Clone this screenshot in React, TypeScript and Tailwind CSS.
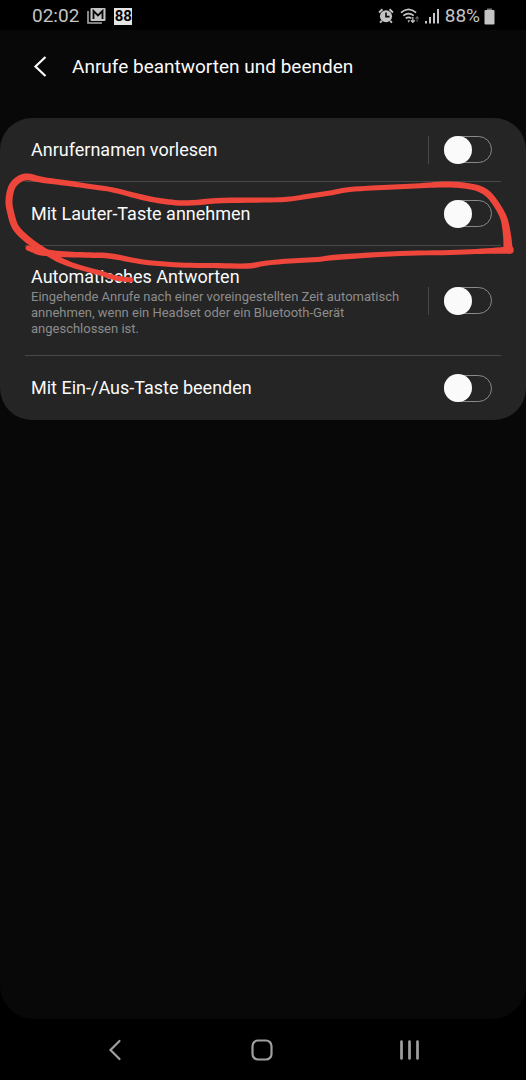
import { useId, useState } from "react";

type Setting = {
  title: string;
  description?: string;
  separated?: boolean;
};

const settings: Setting[] = [
  { title: "Anrufernamen vorlesen", separated: true },
  { title: "Mit Lauter-Taste annehmen" },
  {
    title: "Automatisches Antworten",
    description:
      "Eingehende Anrufe nach einer voreingestellten Zeit automatisch annehmen, wenn ein Headset oder ein Bluetooth-Gerät angeschlossen ist.",
    separated: true,
  },
  { title: "Mit Ein-/Aus-Taste beenden" },
];

function StatusBar() {
  return (
    <div className="flex h-[30px] items-center justify-between bg-black pl-8 pr-[31px] pt-0.5 text-[19px] leading-6 text-[#c4c4c4]">
      <div className="flex items-center gap-2">
        <span>02:02</span>
        <svg className="h-[18px] w-[19px]" viewBox="0 0 19 18" fill="none" aria-hidden="true">
          <path d="M1 4v12h14" stroke="#aaa" strokeWidth="1.6" />
          <rect x="3.5" y="1" width="15" height="13" rx="1" fill="#c4c4c4" />
          <path d="M6.5 12V4l4.500 4.500L15.500 4v8" stroke="#080808" strokeWidth="1.8" />
        </svg>
        <span className="flex h-[17px] w-[18px] items-center justify-center bg-[#e4e4e4] text-[15px] font-bold leading-4 text-black">
          88
        </span>
      </div>
      <div className="flex items-center gap-1.5">
        <svg className="size-4" viewBox="0 0 18 18" fill="none" aria-hidden="true">
          <circle cx="9" cy="9.300" r="6.800" fill="#c4c4c4" />
          <path d="M1.200 5 5 1.500M16.800 5 13 1.500M4.300 14.500l-2 2M13.700 14.500l2 2" stroke="#c4c4c4" strokeWidth="2.200" />
          <path d="M9 5v4.700h4" stroke="#080808" strokeWidth="1.800" />
        </svg>
        <svg className="h-[18px] w-[19px]" viewBox="0 0 20 18" fill="none" aria-hidden="true">
          <g stroke="#c4c4c4" strokeWidth="1.700">
            <path d="M1 5.500q8-7 16 0" />
            <path d="M3.500 8.700q5.500-4.500 11 0" />
            <path d="M6 11.600q3-2.400 6 0" />
          </g>
          <path d="M8 13.500h2.500L9.200 16z" fill="#c4c4c4" />
          <path d="M13.500 10v5M11.500 13.500l2 2.200 2-2.200" stroke="#c4c4c4" strokeWidth="1.300" />
          <path d="M18 15v-5M16.300 11.700 18 9.800l1.700 1.900" stroke="#666" strokeWidth="1.100" />
        </svg>
        <svg className="h-4 w-[14px]" viewBox="0 0 14 16" fill="#c4c4c4" aria-hidden="true">
          <rect x="0" y="13" width="2" height="2.500" />
          <rect x="4" y="9" width="2" height="6.500" />
          <rect x="8" y="5" width="2" height="10.500" />
          <rect x="12" y="1" width="2" height="14.500" />
        </svg>
        <span className="flex items-center gap-1">
          <span>88%</span>
          <svg className="h-[17px] w-[11px]" viewBox="0 0 11 17" aria-hidden="true">
            <rect x="3" y="0.500" width="5" height="2" fill="#777" />
            <rect x="0.500" y="2" width="10" height="14.500" rx="1" fill="#c4c4c4" />
          </svg>
        </span>
      </div>
    </div>
  );
}

function SettingRow({ title, description, separated }: Setting) {
  const [on, setOn] = useState(false);
  const id = useId();
  return (
    <li
      className={`mx-[25px] flex items-center border-b border-[#484848] pl-[6px] pr-[9px] last:border-b-0 ${
        description ? "min-h-[110px]" : "min-h-16"
      }`}
    >
      <div className="min-w-0 flex-1 pr-5">
        <label htmlFor={id} className="block text-[18px] leading-6 text-[#fafafa]">
          {title}
        </label>
        {description && <p className="text-[13px] leading-4 text-[#8c8c8c]">{description}</p>}
      </div>
      {separated && <span className="mr-[15px] h-7 w-px bg-[#484848]" />}
      <span className="grid h-7 w-12 shrink-0 items-center">
        <input
          id={id}
          type="checkbox"
          role="switch"
          checked={on}
          onChange={(e) => setOn(e.target.checked)}
          className="peer col-start-1 row-start-1 h-[27px] w-12 cursor-pointer appearance-none rounded-full border border-[#8a8a8a] checked:bg-[#3e6fe0]"
        />
        <span className="pointer-events-none col-start-1 row-start-1 size-7 rounded-full bg-[#fafafa] peer-checked:justify-self-end" />
      </span>
    </li>
  );
}

// Pen samples: x, y, pen width.
type Sample = [number, number, number];

const lowerLine: Sample[] = [
  [28, 248, 5], [34, 250, 6], [41, 252, 7], [60, 254, 6], [85, 255, 5.5], [110, 256, 5.5],
  [143, 262, 5], [180, 265, 5], [213, 265.5, 5], [247, 266, 5.5], [267, 263, 5], [290, 261, 5],
  [317, 259.5, 5], [340, 257, 5.5], [400, 253.5, 5], [450, 252.5, 5], [487, 251, 5.5], [510, 250, 7.5],
];

const upperLoop: Sample[] = [
  [508, 248, 9], [507, 235, 8], [504, 219, 7], [498, 207, 6.5], [490, 196, 6.5], [482, 190, 6.5],
  [473, 187, 6], [459, 185, 6], [443, 184.5, 6], [415, 186, 5], [383, 187.5, 5], [350, 189.5, 5],
  [330, 193, 5], [310, 196, 5], [290, 199, 5], [270, 200, 5], [223, 200.5, 5.5], [187, 203, 5.5],
  [165, 201.5, 5.5], [143, 197.5, 5.5], [113, 190, 5], [90, 186.5, 5], [70, 183.5, 5.5],
  [43, 180, 6], [25, 177, 7], [13, 185, 7], [9, 200, 7], [11, 214, 7], [16, 228, 7],
  [28, 240, 7], [43, 250, 6], [58, 259, 6], [75, 266, 5], [100, 273, 5], [116, 278, 5], [131, 280, 5],
];

function smooth(points: Sample[], steps = 6): Sample[] {
  const result: Sample[] = [];
  for (let i = 0; i < points.length - 1; i++) {
    const a = points[Math.max(i - 1, 0)];
    const b = points[i];
    const c = points[i + 1];
    const d = points[Math.min(i + 2, points.length - 1)];
    for (let s = 0; s < steps; s++) {
      const t = s / steps;
      const at = (k: number) =>
        0.5 *
        (2 * b[k] +
          (c[k] - a[k]) * t +
          (2 * a[k] - 5 * b[k] + 4 * c[k] - d[k]) * t * t +
          (3 * b[k] - a[k] - 3 * c[k] + d[k]) * t * t * t);
      result.push([at(0), at(1), at(2)]);
    }
  }
  result.push(points[points.length - 1]);
  return result;
}

// Builds one closed band whose thickness follows the pen width.
function band(points: Sample[]): string {
  const line = smooth(points);
  const left: string[] = [];
  const right: string[] = [];
  line.forEach(([x, y, w], i) => {
    const before = line[Math.max(i - 1, 0)];
    const after = line[Math.min(i + 1, line.length - 1)];
    const dx = after[0] - before[0];
    const dy = after[1] - before[1];
    const length = Math.hypot(dx, dy) || 1;
    const nx = (-dy / length) * (w / 2);
    const ny = (dx / length) * (w / 2);
    left.push(`${x + nx} ${y + ny}`);
    right.unshift(`${x - nx} ${y - ny}`);
  });
  return `M${left.concat(right).join("L")}Z`;
}

function PenLine({ points }: { points: Sample[] }) {
  const ends = [points[0], points[points.length - 1]];
  return (
    <g>
      <path d={band(points)} />
      {ends.map(([x, y, w]) => (
        <circle key={x} cx={x} cy={y} r={w / 2} />
      ))}
    </g>
  );
}

function Marker() {
  return (
    <svg
      className="pointer-events-none absolute inset-0 h-full w-full"
      viewBox="0 118 526 302"
      preserveAspectRatio="none"
      fill="#ef463c"
      aria-hidden="true"
    >
      <PenLine points={upperLoop} />
      <PenLine points={lowerLine} />
    </svg>
  );
}

function NavigationBar() {
  return (
    <nav className="flex h-[61px] items-center justify-around bg-black pl-[41px] pr-11 text-[#a0a0a0]">
      <button type="button" aria-label="Zurück" className="p-2">
        <svg className="size-6" viewBox="0 0 24 24" fill="none" stroke="currentColor" strokeWidth="2.200" strokeLinecap="round">
          <path d="M16.500 3 7.500 12l9 9" />
        </svg>
      </button>
      <button type="button" aria-label="Startbildschirm" className="p-2">
        <svg className="size-6" viewBox="0 0 24 24" fill="none" stroke="currentColor" strokeWidth="2.200">
          <rect x="2.500" y="2.500" width="19" height="19" rx="5.500" />
        </svg>
      </button>
      <button type="button" aria-label="Letzte Apps" className="p-2">
        <svg className="size-6" viewBox="0 0 24 24" fill="none" stroke="currentColor" strokeWidth="2.700" strokeLinecap="round">
          <path d="M4.500 3.500v17M12.500 3.500v17M20.500 3.500v17" />
        </svg>
      </button>
    </nav>
  );
}

export default function App() {
  return (
    <div className="flex min-h-screen flex-col bg-black font-[Roboto,sans-serif]">
      <StatusBar />
      <main className="flex-1 rounded-b-[34px] bg-[#080808]">
        <header className="flex h-[88px] items-center gap-5 pb-[14px] pl-7">
          <button type="button" aria-label="Zurück" className="text-[#fafafa]">
            <svg className="size-6" viewBox="0 0 24 24" fill="none" stroke="currentColor" strokeWidth="2.200">
              <path d="M17.500 2 7.500 11.500l10 9.500" />
            </svg>
          </button>
          <h1 className="text-[19px] leading-6 text-[#fafafa]">Anrufe beantworten und beenden</h1>
        </header>
        <section className="relative rounded-[32px] bg-[#252525]">
          <ul>
            {settings.map((s) => (
              <SettingRow key={s.title} {...s} />
            ))}
          </ul>
          <Marker />
        </section>
      </main>
      <NavigationBar />
    </div>
  );
}
